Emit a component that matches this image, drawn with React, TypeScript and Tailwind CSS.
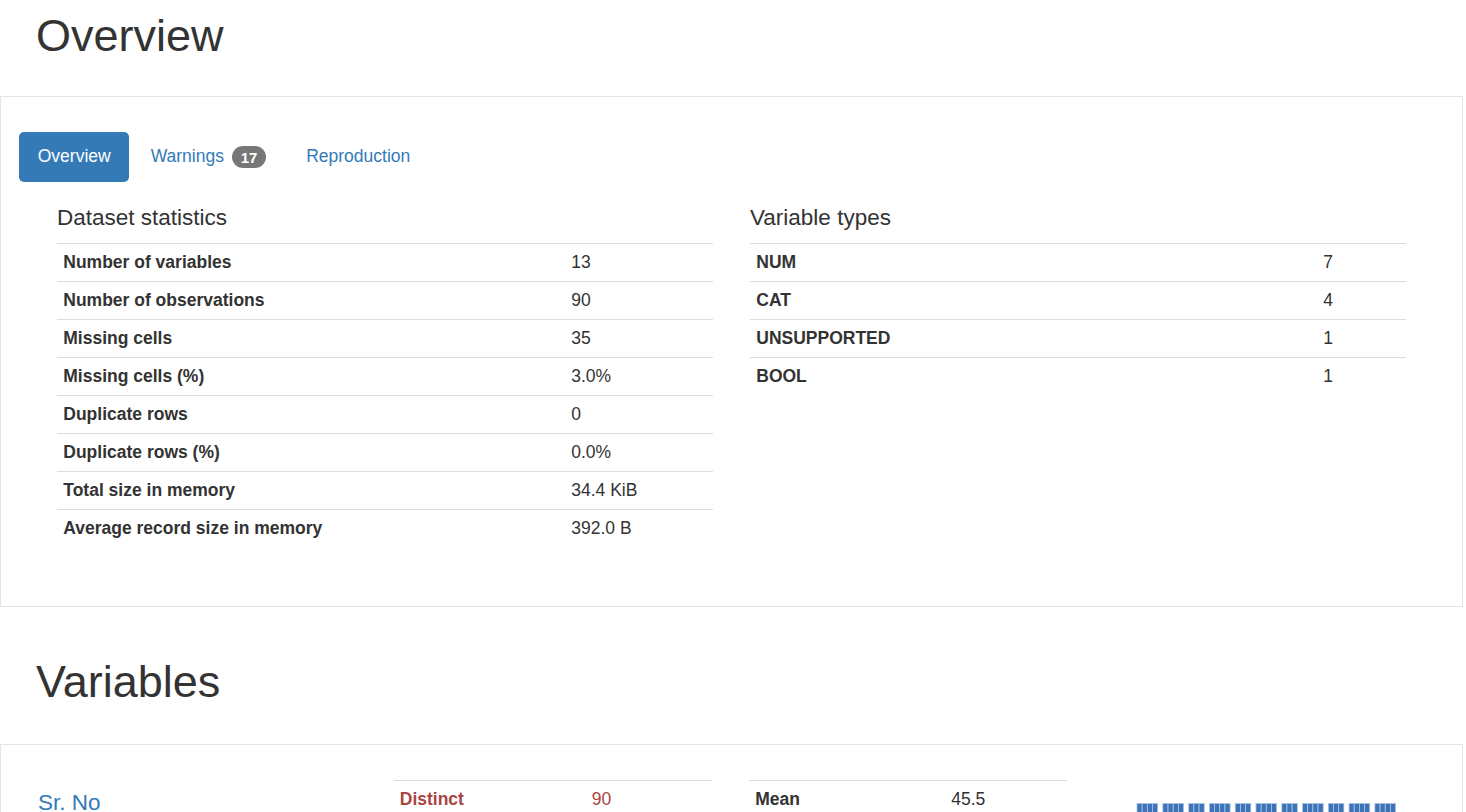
import React from 'react';

// Bootstrap 3 report look, rendered at 125% zoom
const datasetStats: [string, string][] = [
  ['Number of variables', '13'],
  ['Number of observations', '90'],
  ['Missing cells', '35'],
  ['Missing cells (%)', '3.0%'],
  ['Duplicate rows', '0'],
  ['Duplicate rows (%)', '0.0%'],
  ['Total size in memory', '34.4 KiB'],
  ['Average record size in memory', '392.0 B'],
];

const variableTypes: [string, string][] = [
  ['NUM', '7'],
  ['CAT', '4'],
  ['UNSUPPORTED', '1'],
  ['BOOL', '1'],
];

const srNoLeft: [string, string][] = [['Distinct', '90']];
const srNoRight: [string, string][] = [['Mean', '45.5']];

const StatTable: React.FC<{
  rows: [string, string][];
  labelClass: string;
  highlightFirst?: boolean;
}> = ({ rows, labelClass, highlightFirst }) => (
  <table className="w-full border-collapse">
    <tbody>
      {rows.map(([label, value], i) => {
        const danger = highlightFirst && i === 0;
        return (
          <tr key={label} className="border-t border-[#dddddd]">
            <th
              className={`${labelClass} px-[6.25px] py-[6px] text-left font-bold leading-[25px] ${
                danger ? 'text-[#a94442]' : 'text-[#333333]'
              }`}
            >
              {label}
            </th>
            <td
              className={`px-[6.25px] py-[6px] leading-[25px] ${
                danger ? 'text-[#a94442]' : 'text-[#333333]'
              }`}
            >
              {value}
            </td>
          </tr>
        );
      })}
    </tbody>
  </table>
);

// mini histogram: 50 bins, some empty
const Histogram: React.FC = () => {
  const groups = [4, 4, 3, 4, 3, 4, 3, 4, 3, 4, 4];
  const bins: boolean[] = [];
  groups.forEach((g, i) => {
    for (let k = 0; k < g; k++) bins.push(true);
    if (i < groups.length - 1) bins.push(false);
  });
  const w = 258.6 / bins.length;
  return (
    <svg width="262" height="60" viewBox="0 0 262 60">
      {bins.map((on, i) =>
        on ? (
          <rect
            key={i}
            x={1 + i * w}
            y={0.5}
            width={w}
            height={70}
            fill="#3c74b7"
            stroke="#aac4e4"
            strokeWidth={0.8}
          />
        ) : null
      )}
    </svg>
  );
};

const App: React.FC = () => {
  return (
    <div className="h-[812px] w-[1466px] overflow-hidden bg-white font-['Liberation_Sans',Arial,sans-serif] text-[17.5px] leading-[25px] text-[#333333]">
      {/* Overview header */}
      <h1 className="pl-[36px] pt-[11px] text-[45px] font-normal leading-[49.5px]">Overview</h1>

      <section className="mt-[35.5px] w-[1463px] border border-[#e3e3e8] pb-[59px] pt-[35px]">
        {/* tabs */}
        <ul className="flex gap-[2.5px] pl-[18px]">
          <li className="rounded-[5px] bg-[#337ab7] px-[18.75px] pb-[13px] pt-[12px] text-white">Overview</li>
          <li className="flex items-center rounded-[5px] px-[18.75px] pb-[13px] pt-[12px] text-[#337ab7]">
            Warnings
            <span className="ml-[8px] mt-[1px] rounded-[12.5px] bg-[#777777] px-[8.75px] py-[3.75px] text-[15px] font-bold leading-[15px] text-white">
              17
            </span>
          </li>
          <li className="rounded-[5px] px-[18.75px] pb-[13px] pt-[12px] text-[#337ab7]">Reproduction</li>
        </ul>

        <div className="grid grid-cols-[656px_656px] gap-x-[37px] px-[56px] pt-[24px]">
          <div>
            <h4 className="mb-[12.5px] text-[22.5px] font-normal leading-[24.75px]">Dataset statistics</h4>
            <StatTable rows={datasetStats} labelClass="w-[508px]" />
          </div>
          <div>
            <h4 className="mb-[12.5px] text-[22.5px] font-normal leading-[24.75px]">Variable types</h4>
            <StatTable rows={variableTypes} labelClass="w-[567px]" />
          </div>
        </div>
      </section>

      {/* Variables header */}
      <h1 className="pl-[36px] pt-[50px] text-[45px] font-normal leading-[49.5px]">Variables</h1>

      <section className="mt-[37.5px] w-[1463px] border border-[#e3e3e8] pl-[37px]">
        <div className="grid grid-cols-[318px_318px_318px_318px] items-start gap-x-[37.5px]">
          <div className="pt-[46px]">
            <a className="text-[22.5px] leading-[24.75px] text-[#337ab7]">Sr. No</a>
          </div>
          <div className="pt-[35px]">
            <StatTable rows={srNoLeft} labelClass="w-[192px]" highlightFirst />
          </div>
          <div className="pt-[35px]">
            <StatTable rows={srNoRight} labelClass="w-[196px]" />
          </div>
          <div className="pl-[31px] pt-[58px]">
            <Histogram />
          </div>
        </div>
      </section>
    </div>
  );
};

export default App;
